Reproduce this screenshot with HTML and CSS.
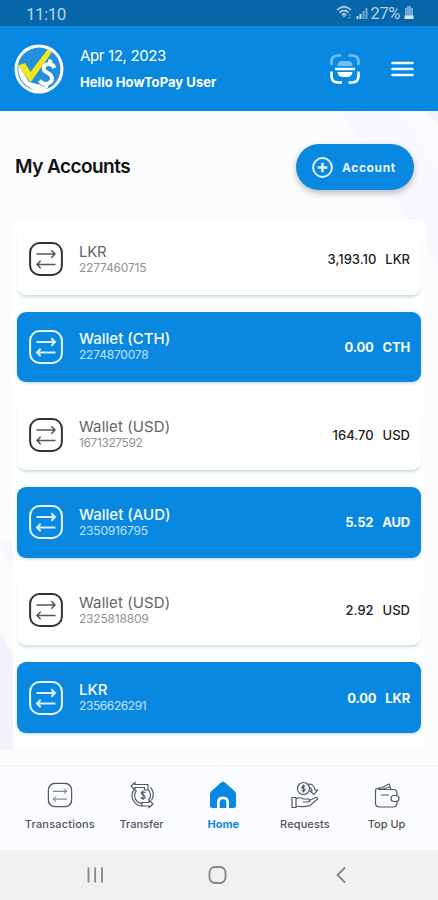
FILE: index.html
```html
<!DOCTYPE html>
<html lang="en">
<head>
<meta charset="utf-8">
<title>My Accounts</title>
<link rel="stylesheet" href="styles.css">
</head>
<body>
<svg class="defs" width="0" height="0" aria-hidden="true">
  <symbol id="swap" viewBox="0 0 34 34">
    <rect x="1.100" y="1.100" width="31.800" height="31.800" rx="9.500" class="frame"/>
    <path d="M7.500 12H26M22.300 8.300L26 12l-3.700 3.700M26.500 22.500H8M11.700 18.800L8 22.500l3.700 3.700"/>
  </symbol>
</svg>
<div class="status">
  <span class="time">11:10</span>
  <svg class="wifi" width="34" height="16" viewBox="0 0 34 16">
    <g fill="none" stroke="#a9c9e3" stroke-width="1.7"><path d="M1 5Q8 -1.500 15 5M3.500 7.500Q8 3.500 12.500 7.500M5.800 10Q8 8 10.200 10"/></g>
    <path d="M6.500 10.500h3L8 12.500z" fill="#a9c9e3"/><path d="M12 10h3M12 12.500h3" stroke="#5b9acb" stroke-width="1"/>
    <path d="M21.500 14v-3M24.500 14V9" stroke="#c0d8ea" stroke-width="2"/><path d="M27.500 14V6M30.500 14V3" stroke="#76aad1" stroke-width="2"/>
  </svg>
  <span class="pct">27%</span>
  <svg class="battery" width="10" height="14" viewBox="0 0 10 14"><path d="M3 0h4v2h2v8H1V2h2z" fill="#70a7d0"/><path d="M.5 9.500h9V13h-9z" fill="#d4e4ef"/></svg>
</div>
<header class="header">
  <svg class="logo" width="50" height="50" viewBox="0 0 50 50">
    <circle cx="25" cy="25" r="24.500" fill="#fff"/><circle cx="25" cy="25" r="21.500" fill="#238fdd"/>
    <path d="M4.500 21Q3 35 14 42.500T33 45L27 41 15 38z" fill="#fff"/>
    <path d="M40.500 24Q38.500 19 33.500 20.200C28.500 21.500 28.500 26.500 33 28.500C39.500 31.500 39.500 37.500 34 39.500Q29 41 25.500 36.500M36.500 15.500l-1 5M33 39l-1 5" fill="none" stroke="#fff" stroke-width="3.900"/>
    <path d="M4 21.500l7-2.500 5.500 9L33.500 5.500l4.500 2.500L16.500 38.500z" fill="#f5e51d"/>
  </svg>
  <div class="hello"><span class="date">Apr 12, 2023</span><span class="user">Hello HowToPay User</span></div>
  <svg class="scan" width="30" height="30" viewBox="0 0 30 30" fill="none" stroke-width="2.600">
    <path d="M1.500 11V8Q1.500 1.500 8 1.500h3M18.500 1.500H22q6.500 0 6.500 6.500v3" stroke="#78bdf0"/>
    <path d="M1.500 17.500V22q0 6.500 6.500 6.500h4M18.500 28.500H22q6.500 0 6.500-6.500v-4.500" stroke="#fff"/>
    <path d="M7.500 12V11Q8 7 12 7h6q4 0 4.500 4v1z" fill="#78bdf0"/><path d="M5 13.800h20v2.400H5zM7.500 18h15q-.5 5-5.500 5h-4q-5 0-5.500-5z" fill="#fff"/>
  </svg>
  <svg class="menu" width="23" height="16" viewBox="0 0 23 16"><path d="M1.500 2h20M1.500 8h20M1.500 14h20" stroke="#f1f8fe" stroke-width="2.600" stroke-linecap="round"/></svg>
</header>
<main class="main">
  <div class="title-row">
    <h1>My Accounts</h1>
    <button class="add"><svg width="21" height="21" viewBox="0 0 21 21" fill="none" stroke="#e2f2ff"><circle cx="10.500" cy="10.500" r="9.400" stroke-width="2"/><path d="M10.500 5.700v9.600M5.700 10.500h9.600" stroke-width="2.500"/></svg><span>Account</span></button>
  </div>
  <section class="list">
    <article class="card"><svg class="swap"><use href="#swap"/></svg><div class="info"><span class="name lkr">LKR</span><span class="num">2277460715</span></div><div class="amt"><span>3,193.10</span><span>LKR</span></div></article>
    <article class="card blue"><svg class="swap"><use href="#swap"/></svg><div class="info"><span class="name">Wallet (CTH)</span><span class="num">2274870078</span></div><div class="amt"><span>0.00</span><span>CTH</span></div></article>
    <article class="card"><svg class="swap"><use href="#swap"/></svg><div class="info"><span class="name">Wallet (USD)</span><span class="num narrow">1671327592</span></div><div class="amt"><span>164.70</span><span>USD</span></div></article>
    <article class="card blue"><svg class="swap"><use href="#swap"/></svg><div class="info"><span class="name">Wallet (AUD)</span><span class="num">2350916795</span></div><div class="amt"><span>5.52</span><span>AUD</span></div></article>
    <article class="card"><svg class="swap"><use href="#swap"/></svg><div class="info"><span class="name">Wallet (USD)</span><span class="num">2325818809</span></div><div class="amt"><span>2.92</span><span>USD</span></div></article>
    <article class="card blue"><svg class="swap"><use href="#swap"/></svg><div class="info"><span class="name lkr">LKR</span><span class="num narrow">2356626291</span></div><div class="amt"><span>0.00</span><span>LKR</span></div></article>
  </section>
</main>
<nav class="tabs">
  <div class="tab t1"><svg width="28" height="28" viewBox="-2 -2 38 38"><use href="#swap" width="34" height="34"/></svg><span>Transactions</span></div>
  <div class="tab t2"><svg width="28" height="28" viewBox="0 0 28 28"><path d="M6 8.500A10.500 10.500 0 0 0 15.500 25M22.500 6.500A10.500 10.500 0 0 1 23.500 19.500M8.500 9.500A8 8 0 0 0 14 22.500M20 8.500A8 8 0 0 1 21 19M7 1.500L3 5l4 4V6.500h9.500v2.500H20V3.500H7zM21 26.500l4-3.500-4-4v2.500h-7V25h7z"/><path d="M17.500 11.500q-4-1.500-4.300.5c0 2 4 1.500 4 4 0 2-3 2-4.500.500M15 9.500V19"/></svg><span>Transfer</span></div>
  <div class="tab active"><svg width="28" height="28" viewBox="0 0 28 28"><path d="M12 1.500q2-1.500 4 0l10 9q1 1 1 2.500v11.500q0 2.500-2.500 2.500H20v-5.500q0-6-6-6t-6 6V27H3.500Q1 27 1 24.500V13q0-1.500 1-2.500z"/><path d="M10.700 27v-5.500q0-3.300 3.300-3.300t3.300 3.300V27z"/></svg><span>Home</span></div>
  <div class="tab t4"><svg width="28" height="28" viewBox="0 0 28 28"><circle cx="12.500" cy="7.500" r="6"/><path d="M14.500 5q-3.500-1-3.500 1t3 2q0 3-3.500 1.500M12.500 3.500v8M16.500 3.500q6-2 7.500 5.500h2.500L23 13.500 19 10h2q-.5-3.500-3-3.500M1 16.500h4v10H1zM5 18q4-2.500 7 0h6q1.500 2.500-1 3h-5M18.500 19.500l6-3q2.500-.5 2 1.500L19 24.500q-7 2-14 .5"/></svg><span>Requests</span></div>
  <div class="tab t5"><svg width="28" height="28" viewBox="0 0 28 28"><path d="M5 8.500h15.500q3.500 0 3.500 3.500v2.500M24 20.500V22q0 4-4 4H6.500Q2.500 26 2.500 22V10q0-3 3-3H8M5 8.500L16 3l2 5.500M8 8.500l8.500-2.500M8 14h8M23 14.500h-2a3 3 0 0 0 0 6h2q3 0 3-3t-3-3z"/></svg><span>Top Up</span></div>
</nav>
<footer class="system">
  <svg width="18" height="18" viewBox="0 0 18 18"><path d="M2.500 1.500v15M9.200 1.500v15M16 1.500v15"/></svg>
  <svg width="20" height="18" viewBox="0 0 20 18"><rect x="1.500" y="1" width="16" height="16" rx="5.500"/></svg>
  <svg width="12" height="18" viewBox="0 0 12 18"><path d="M10 1.500L2.500 9l7.500 7.500"/></svg>
</footer>
</body>
</html>
```
FILE: styles.css
```css
* { box-sizing: border-box; }
body { margin: 0; width: 438px; height: 900px; overflow: hidden; display: flex; flex-direction: column; font-family: Inter, "Liberation Sans", sans-serif; background: #fbfcfe; color: #111; }
.defs { position: absolute; }
.status { height: 26px; flex: none; background: #0766a9; display: flex; align-items: center; padding: 0 24px 0 26px; color: #b8d2e7; }
.time { font: 17px/26px Roboto, sans-serif; letter-spacing: -.5px; margin-right: auto; padding-top: 1px; }
.wifi { margin-right: 1px; }
.pct { font: 16.5px/28px Roboto, sans-serif; letter-spacing: -.4px; padding-top: 1px; }
.battery { margin-left: 4px; }
.header { height: 85px; flex: none; background: #0988e1; color: #fff; display: flex; align-items: center; padding: 0 24px 0 14px; }
.hello { display: flex; flex-direction: column; margin-left: 16px; gap: 6px; margin-right: auto; }
.date { font-size: 15px; line-height: 20px; letter-spacing: -.35px; }
.user { font-size: 13px; line-height: 20px; font-weight: 700; letter-spacing: .05px; }
.menu { margin-left: 31px; }
.main {
  flex: 1;
  padding: 33px 13px 0;
  background:
    linear-gradient(to top right, transparent 49%, #f4f2fc 51%) 424px 0 / 14px 12px no-repeat,
    linear-gradient(to top right, transparent 49%, #f5f3fd99 52%, #f7f5fd33 85%) 340px 0 / 98px 156px no-repeat,
    linear-gradient(to bottom left, transparent 35%, #f3f1fb 50%) 0 524px / 13px 24px no-repeat,
    linear-gradient(#f3f1fb, #f3f1fb) 0 548px / 13px 90px no-repeat,
    linear-gradient(to top right, transparent 45%, #f7f6fd 60%) 0 430px / 13px 30px no-repeat,
    #fbfcfe;
}
.title-row { height: 46px; display: flex; align-items: center; justify-content: space-between; padding: 0 11px 0 2px; }
h1 { margin: 0; font-size: 19px; font-weight: 600; letter-spacing: -.55px; line-height: 28px; }
.add { width: 118px; height: 46px; border: 0; border-radius: 23px; background: #0988e1; box-shadow: 0 3px 6px #0004; color: #e5f3ff; display: flex; align-items: center; padding: 0 0 0 16px; gap: 9px; font: 700 12px Inter, sans-serif; letter-spacing: .6px; }
.list { margin: 30px 0 0; height: 528px; padding: 4px; background: #feffff; border-radius: 8px; display: flex; flex-direction: column; gap: 17.200px; }
.card { height: 70.500px; flex: none; background: #fff; border-radius: 9px; box-shadow: 0 3px 3px -1px #cbdce5; display: flex; align-items: center; padding: 0 11px 0 12px; }
.swap { width: 34px; height: 34px; fill: none; stroke: #555; stroke-width: 1.5; --frame: #333; }
.frame { stroke-width: 2; stroke: var(--frame, #555a62); }
.info { display: flex; flex-direction: column; margin: -1px auto 0 16px; }
.name { font-size: 15px; line-height: 18px; letter-spacing: .1px; color: #666; }
.name.lkr { letter-spacing: -.3px; }
.num { font-size: 12px; line-height: 14px; color: #929292; letter-spacing: -.2px; }
.num.narrow { letter-spacing: -.4px; }
.amt { display: flex; gap: 9px; font-size: 13px; font-weight: 500; color: #222; letter-spacing: 0; }
.blue { background: #0988e1; box-shadow: 0 1px 3px #c2d2dd; }
.blue .swap { stroke: #d9efff; stroke-width: 2; --frame: #e8f6ff; }
.blue .name { color: #f5fbff; font-weight: 500; letter-spacing: 0; }
.blue .num { color: #c3e3fb; }
.blue .amt { color: #f5fbff; font-weight: 700; letter-spacing: -.2px; }
.tabs { height: 85px; flex: none; background: #fbfcff; border-top: 1px solid #f0f0f3; display: grid; grid-template-columns: repeat(5, 81.700px); padding: 15px 0 0 19px; }
.tab { display: flex; flex-direction: column; align-items: center; font-size: 11px; line-height: 16px; gap: 7px; color: #555; font-weight: 500; white-space: nowrap; }
.tab svg { fill: none; stroke: #555a62; stroke-width: 1.2; }
.t1 { letter-spacing: .2px; }
.t4 { letter-spacing: .1px; }
.tab.active { color: #0988e1; font-weight: 700; }
.tab.active svg { fill: #0988e1; stroke: none; }
.system { height: 50px; flex: none; background: #f1f1f1; display: flex; align-items: center; justify-content: space-between; padding: 0 91px 0 86px; }
.system svg { fill: none; stroke: #858585; stroke-width: 1.8; }
.system svg:nth-child(2) { margin-right: 3px; }
```
